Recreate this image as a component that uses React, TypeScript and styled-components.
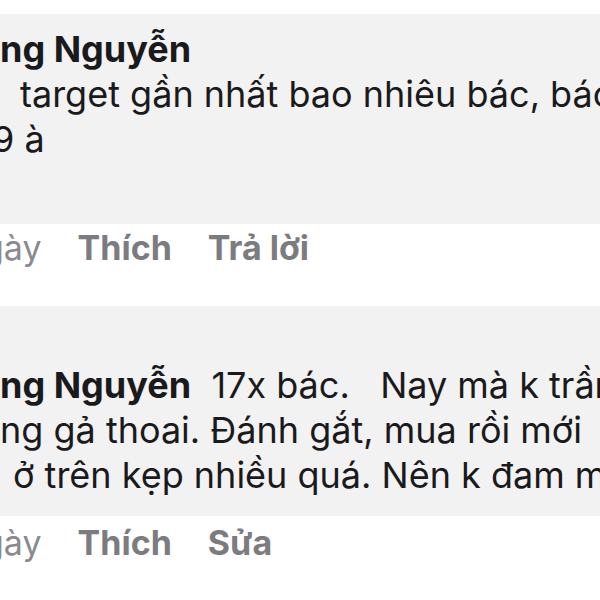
import React from "react";
import styled, { createGlobalStyle } from "styled-components";

const GlobalStyle = createGlobalStyle`
  body {
    margin: 0;
    background: #ffffff;
    font-family: Inter, "Noto Sans", "Liberation Sans", sans-serif;
  }
`;

const Page = styled.div`
  width: 600px;
  height: 600px;
  overflow: hidden;
  padding-top: 14px;
  box-sizing: border-box;
  background: #ffffff;
`;

const Bubble = styled.div<{ $top: number; $bottom: number }>`
  background: #f2f2f2;
  padding: ${(p) => p.$top}px 0 ${(p) => p.$bottom}px;
`;

const Line = styled.div<{ $indent?: number }>`
  white-space: pre;
  font-size: 36px;
  line-height: 45px;
  color: #1a1a1c;
  padding-left: ${(p) => Math.max(p.$indent ?? 0, 0)}px;
  text-indent: ${(p) => Math.min(p.$indent ?? 0, 0)}px;
`;

const Name = styled.span`
  font-weight: 700;
`;

const Actions = styled.div<{ $top: number; $bottom: number }>`
  display: flex;
  gap: 36px;
  margin: ${(p) => p.$top}px 0 ${(p) => p.$bottom}px -17px;
  font-size: 34px;
  line-height: 46px;
  white-space: nowrap;
`;

const Time = styled.span`
  color: #8a8a8e;
`;

const Action = styled.span`
  color: #7c7c80;
  font-weight: 700;
`;

export default function App() {
  return (
    <>
      <GlobalStyle />
      <Page>
        <Bubble $top={13} $bottom={62}>
          <Line>
            <Name>ng Nguyễn</Name>
          </Line>
          <Line $indent={20}>target gần nhất bao nhiêu bác, bác</Line>
          <Line $indent={-8}>9 à</Line>
        </Bubble>
        <Actions $top={1} $bottom={35}>
          <Time>gày</Time>
          <Action>Thích</Action>
          <Action>Trả lời</Action>
        </Actions>
        <Bubble $top={57} $bottom={18}>
          <Line>
            <Name>ng Nguyễn</Name>
            {"  17x bác.   Nay mà k trần"}
          </Line>
          <Line>ng gả thoai. Đánh gắt, mua rồi mới</Line>
          <Line $indent={13}>ở trên kẹp nhiều quá. Nên k đam mê</Line>
        </Bubble>
        <Actions $top={4} $bottom={0}>
          <Time>gày</Time>
          <Action>Thích</Action>
          <Action>Sửa</Action>
        </Actions>
      </Page>
    </>
  );
}
